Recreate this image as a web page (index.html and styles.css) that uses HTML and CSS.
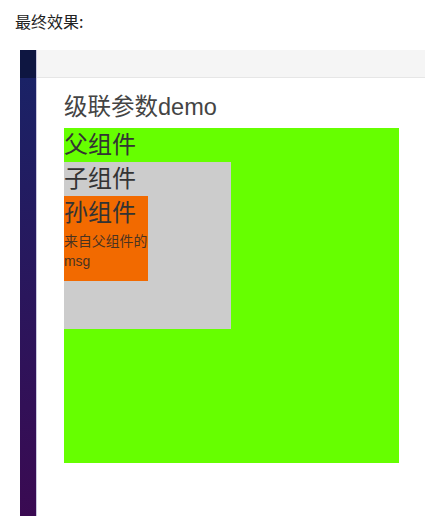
FILE: index.html
```html
<!DOCTYPE html>
<html lang="zh-CN">
<head>
<meta charset="utf-8">
<title>级联参数demo</title>
<link rel="stylesheet" href="styles.css">
</head>
<body>
<p class="caption">最终效果:</p>
<div class="stage">
  <div class="sidebar"><div class="sidebar-top"></div><div class="sidebar-body"></div></div>
  <div class="rule"></div>
  <div class="main">
    <div class="topbar"></div>
    <div class="content">
      <h2 class="heading">级联参数demo</h2>
      <div class="box parent">
        <div class="box-title">父组件</div>
        <div class="box child">
          <div class="box-title">子组件</div>
          <div class="box grandchild">
            <div class="box-title">孙组件</div>
            <p class="msg">来自父组件的msg</p>
          </div>
        </div>
      </div>
    </div>
  </div>
</div>
</body>
</html>
```
FILE: styles.css
```css
html, body {
  margin: 0;
  padding: 0;
  background: #fff;
  overflow: hidden;
}
body {
  font-family: "Liberation Sans", "Noto Sans CJK SC", sans-serif;
  color: #333;
}
.caption {
  margin: 11px 0 0 15px;
  height: 39px;
  font-size: 16px;
  line-height: 20px;
  font-family: "Noto Sans CJK SC", sans-serif;
  color: #222;
}
.stage {
  display: flex;
  margin-left: 20px;
  height: 466px;
}
.sidebar {
  width: 16px;
  display: flex;
  flex-direction: column;
}
.sidebar-top {
  height: 28px;
  background: #0e1641;
}
.sidebar-body {
  flex: 1;
  background: linear-gradient(to bottom, #1a2266, #3a0a52);
}
.rule {
  width: 1px;
  background: #c9c7de;
}
.main {
  flex: 1;
  display: flex;
  flex-direction: column;
}
.topbar {
  height: 27px;
  background: #f5f5f5;
  border-bottom: 1px solid #e6e6e6;
}
.content {
  padding: 12px 0 0 27px;
}
.heading {
  margin: 0 0 4px;
  font-size: 23.5px;
  line-height: 34px;
  font-weight: normal;
  color: #444;
}
.box-title {
  font-size: 24px;
  line-height: 34px;
  color: #333;
}
.parent {
  width: 335px;
  height: 335px;
  background: #66ff00;
}
.child {
  width: 167px;
  height: 167px;
  background: #cccccc;
}
.grandchild {
  width: 84px;
  height: 85px;
  background: #f26a00;
}
.msg {
  margin: 1px 0 0;
  font-size: 13.9px;
  line-height: 20px;
  color: #4a3320;
}
```
